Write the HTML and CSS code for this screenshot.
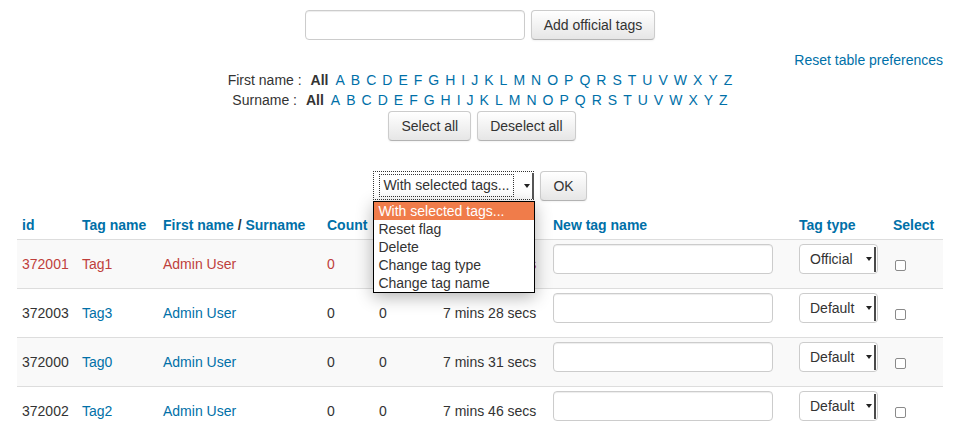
FILE: index.html
```html
<!DOCTYPE html>
<html>
<head>
<meta charset="utf-8">
<title>Manage tags</title>
<link rel="stylesheet" href="styles.css">
</head>
<body>
<div class="page">
  <form class="addform">
    <input type="text" class="text-in">
    <button type="button" class="btn">Add official tags</button>
  </form>
  <div class="reset"><a href="#">Reset table preferences</a></div>
  <div class="initials">
    <span class="lbl">First name :</span><strong>All</strong><a href="#">A</a><a href="#">B</a><a href="#">C</a><a href="#">D</a><a href="#">E</a><a href="#">F</a><a href="#">G</a><a href="#">H</a><a href="#">I</a><a href="#">J</a><a href="#">K</a><a href="#">L</a><a href="#">M</a><a href="#">N</a><a href="#">O</a><a href="#">P</a><a href="#">Q</a><a href="#">R</a><a href="#">S</a><a href="#">T</a><a href="#">U</a><a href="#">V</a><a href="#">W</a><a href="#">X</a><a href="#">Y</a><a href="#">Z</a>
  </div>
  <div class="initials">
    <span class="lbl">Surname :</span><strong>All</strong><a href="#">A</a><a href="#">B</a><a href="#">C</a><a href="#">D</a><a href="#">E</a><a href="#">F</a><a href="#">G</a><a href="#">H</a><a href="#">I</a><a href="#">J</a><a href="#">K</a><a href="#">L</a><a href="#">M</a><a href="#">N</a><a href="#">O</a><a href="#">P</a><a href="#">Q</a><a href="#">R</a><a href="#">S</a><a href="#">T</a><a href="#">U</a><a href="#">V</a><a href="#">W</a><a href="#">X</a><a href="#">Y</a><a href="#">Z</a>
  </div>
  <div class="selbtns">
    <button type="button" class="btn">Select all</button>
    <button type="button" class="btn">Deselect all</button>
  </div>
  <div class="bulk">
    <div class="bulk-wrap">
      <div class="fsel">
        <span class="focus">With selected tags...</span>
        <span class="caret"></span>
        <span class="bar"></span>
      </div>
      <ul class="popup">
        <li class="hl">With selected tags...</li>
        <li>Reset flag</li>
        <li>Delete</li>
        <li>Change tag type</li>
        <li>Change tag name</li>
      </ul>
    </div>
    <button type="button" class="btn">OK</button>
  </div>
  <table class="tags">
    <colgroup>
      <col class="c-id"><col class="c-name"><col class="c-user"><col class="c-count"><col class="c-flag"><col class="c-time"><col class="c-new"><col class="c-type"><col class="c-sel">
    </colgroup>
    <thead>
      <tr>
        <th><a href="#">id</a></th>
        <th><a href="#">Tag name</a></th>
        <th><a href="#">First name</a> / <a href="#">Surname</a></th>
        <th><a href="#">Count</a></th>
        <th><a href="#">Flag</a></th>
        <th><a href="#">Modified</a></th>
        <th><a href="#">New tag name</a></th>
        <th><a href="#">Tag type</a></th>
        <th><a href="#">Select</a></th>
      </tr>
    </thead>
    <tbody>
      <tr class="odd flagged">
        <td>372001</td>
        <td><a href="#">Tag1</a></td>
        <td><a href="#">Admin User</a></td>
        <td>0</td>
        <td>1</td>
        <td>7 mins 20 secs</td>
        <td><input type="text" class="cell-in"></td>
        <td><div class="tsel"><span class="val">Official</span><span class="caret"></span><span class="bar"></span></div></td>
        <td><input type="checkbox" class="chk"></td>
      </tr>
      <tr>
        <td>372003</td>
        <td><a href="#">Tag3</a></td>
        <td><a href="#">Admin User</a></td>
        <td>0</td>
        <td>0</td>
        <td>7 mins 28 secs</td>
        <td><input type="text" class="cell-in"></td>
        <td><div class="tsel"><span class="val">Default</span><span class="caret"></span><span class="bar"></span></div></td>
        <td><input type="checkbox" class="chk"></td>
      </tr>
      <tr class="odd">
        <td>372000</td>
        <td><a href="#">Tag0</a></td>
        <td><a href="#">Admin User</a></td>
        <td>0</td>
        <td>0</td>
        <td>7 mins 31 secs</td>
        <td><input type="text" class="cell-in"></td>
        <td><div class="tsel"><span class="val">Default</span><span class="caret"></span><span class="bar"></span></div></td>
        <td><input type="checkbox" class="chk"></td>
      </tr>
      <tr>
        <td>372002</td>
        <td><a href="#">Tag2</a></td>
        <td><a href="#">Admin User</a></td>
        <td>0</td>
        <td>0</td>
        <td>7 mins 46 secs</td>
        <td><input type="text" class="cell-in"></td>
        <td><div class="tsel"><span class="val">Default</span><span class="caret"></span><span class="bar"></span></div></td>
        <td><input type="checkbox" class="chk"></td>
      </tr>
    </tbody>
  </table>
</div>
</body>
</html>
```

FILE: styles.css
```css
* { box-sizing: border-box; }
body {
  margin: 0;
  font-family: "Liberation Sans", Arial, Helvetica, sans-serif;
  font-size: 14px;
  line-height: 20px;
  color: #333;
  background: #fff;
}
a { color: #0070a8; text-decoration: none; }

.page { padding: 10px 11px 0 17px; }

.addform {
  display: flex;
  justify-content: center;
  gap: 6px;
  height: 30px;
  margin: 0;
}
.text-in, .cell-in {
  height: 30px;
  border: 1px solid #ccc;
  border-radius: 4px;
  box-shadow: inset 0 1px 1px rgba(0,0,0,.075);
  padding: 4px 6px;
  font: inherit;
  margin: 0;
  background: #fff;
}
.text-in { width: 220px; }

.btn {
  height: 30px;
  padding: 4px 12px;
  font: inherit;
  line-height: 20px;
  color: #333;
  background: linear-gradient(#ffffff, #e6e6e6);
  border: 1px solid #ccc;
  border-bottom-color: #b3b3b3;
  border-radius: 4px;
  box-shadow: inset 0 1px 0 rgba(255,255,255,.2), 0 1px 2px rgba(0,0,0,.05);
  margin: 0;
}

.reset { margin-top: 10px; text-align: right; }

.initials {
  display: flex;
  justify-content: center;
  gap: 6px;
}
.initials .lbl { margin-right: 3px; }
.initials strong { margin-right: 1px; }

.selbtns {
  display: flex;
  justify-content: center;
  gap: 6px;
  margin-top: 1px;
  padding-left: 4px;
}

.bulk {
  display: flex;
  justify-content: center;
  gap: 6px;
  margin-top: 30px;
  height: 30px;
}
.bulk-wrap { position: relative; }
.fsel {
  width: 161px;
  height: 29px;
  display: flex;
  align-items: center;
  border: 1px dotted #333;
  border-right: none;
  background: #fff;
}
.fsel .focus {
  margin-left: 5px;
  width: 136px;
  height: 23px;
  border: 1px dotted #333;
  padding: 0 3px;
  line-height: 21px;
  white-space: nowrap;
  overflow: hidden;
}
.caret {
  width: 0;
  height: 0;
  border-left: 3px solid transparent;
  border-right: 3px solid transparent;
  border-top: 4px solid #222;
}
.fsel .caret { margin-left: 10px; }
.bar {
  width: 2px;
  align-self: stretch;
  background: #555;
}
.fsel .bar { margin: 1px 0 0 2px; }

.popup {
  position: absolute;
  top: 30px;
  left: 0;
  width: 162px;
  margin: 0;
  padding: 0;
  list-style: none;
  background: #fff;
  border: 1px solid #000;
  box-shadow: 0 4px 16px rgba(0,0,0,.3);
  z-index: 5;
}
.popup li {
  line-height: 18px;
  height: 18px;
  padding-left: 4px;
  color: #333;
  white-space: nowrap;
}
.popup li.hl { background: #f07c4a; color: #fff; }

.tags {
  width: 100%;
  border-collapse: collapse;
  table-layout: fixed;
  margin-top: 10px;
}
.c-id { width: 60px; }
.c-name { width: 81px; }
.c-user { width: 164px; }
.c-count { width: 52px; }
.c-flag { width: 64px; }
.c-time { width: 110px; }
.c-new { width: 246px; }
.c-type { width: 94px; }
.c-sel { width: 55px; }

.tags th, .tags td {
  padding: 4px 5px;
  text-align: left;
  vertical-align: middle;
  white-space: nowrap;
}
.tags th {
  font-weight: bold;
  border-bottom: 1px solid #ddd;
}
.tags td { border-top: 1px solid #ddd; }
.tags tr.odd td { background: #f9f9f9; }
.tags tr.flagged td, .tags tr.flagged a { color: #bf3f3c; }

.cell-in {
  display: block;
  width: 220px;
  margin-bottom: 10px;
}
.tags tr td .tsel {
  width: 79px;
  height: 30px;
  margin-bottom: 10px;
  display: flex;
  align-items: center;
  border: 1px solid #ccc;
  border-radius: 4px;
  background: #fff;
  padding-left: 10px;
  color: #333;
}
.tsel .val { flex: 1; }
.tsel .caret { margin-right: 2px; }
.tsel .bar { margin: 2px 1px 1px 0; background: #4a4a4a; }

.chk {
  -webkit-appearance: none;
  appearance: none;
  width: 11px;
  height: 11px;
  border: 1px solid #8a8a8a;
  border-radius: 2px;
  background: #fff;
  margin: 0 0 0 2px;
  vertical-align: middle;
}
```
